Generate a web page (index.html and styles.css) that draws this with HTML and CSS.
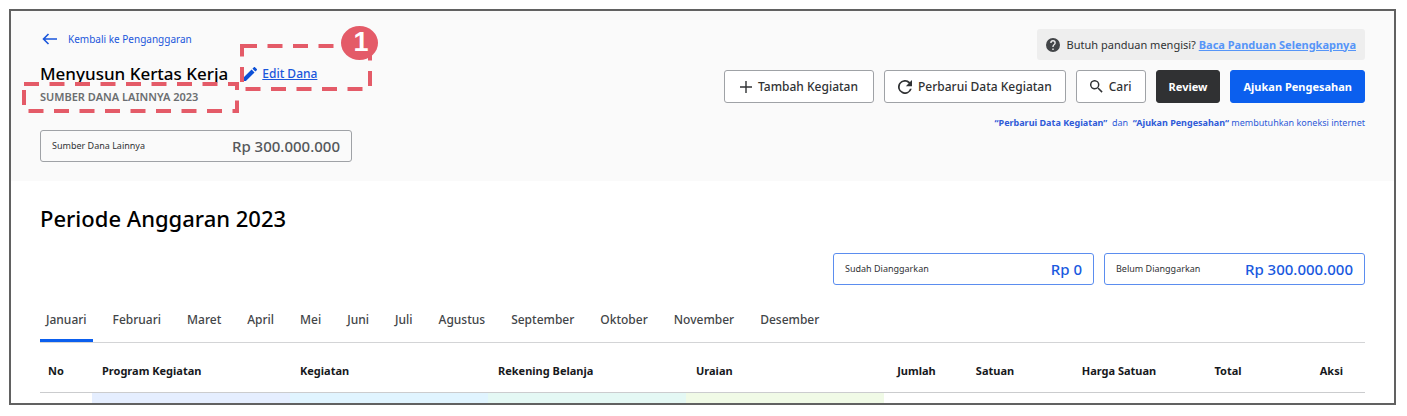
FILE: index.html
```html
<!DOCTYPE html>
<html lang="id">
<head>
    <meta charset="UTF-8">
    <title>Menyusun Kertas Kerja</title>
    <link rel="stylesheet" href="styles.css">
</head>
<body>
    <div class="frame">
        <header class="hero">
            <div class="hero-left">
                <a class="back-link" href="#">
                    <svg width="16" height="12" viewBox="0 0 16 12"><path d="M15 6H2M6.500 1L1.500 6l5 5" fill="none" stroke="currentColor" stroke-width="1.600"/></svg>
                    Kembali ke Penganggaran
                </a>
                <div class="title-row">
                    <h1>Menyusun Kertas Kerja</h1>
                    <a class="edit-link" href="#">
                        <svg width="14" height="14" viewBox="3 3 18 18"><path fill="currentColor" d="M3 17.250V21h3.750L17.810 9.940l-3.750-3.750L3 17.250zM20.710 7.040a1 1 0 0 0 0-1.410l-2.340-2.340a1 1 0 0 0-1.410 0l-1.830 1.830 3.750 3.750 1.830-1.830z"/></svg>
                        <span>Edit Dana</span>
                    </a>
                    <svg class="mark mark-edit" width="132" height="48"><rect x="2" y="2" width="128" height="43"/></svg>
                    <span class="mark-number">1</span>
                </div>
                <p class="subtitle">
                    SUMBER DANA LAINNYA 2023
                    <svg class="mark mark-source" width="218" height="32"><rect x="2" y="2" width="213" height="27"/></svg>
                </p>
                <div class="amount-box amount-grey">
                    <span>Sumber Dana Lainnya</span>
                    <strong>Rp 300.000.000</strong>
                </div>
            </div>

            <div class="hero-right">
                <div class="help">
                    <svg width="14" height="14" viewBox="2 2 20 20"><path fill="currentColor" d="M12 2a10 10 0 1 0 0 20 10 10 0 0 0 0-20zm1 17h-2v-2h2v2zm2.070-7.750l-.9.920C13.450 12.900 13 13.500 13 15h-2v-.5c0-1.100.45-2.100 1.170-2.830l1.240-1.260c.37-.36.59-.86.59-1.410a2 2 0 1 0-4 0H8a4 4 0 1 1 8 0c0 .88-.36 1.680-.93 2.250z"/></svg>
                    <span>Butuh panduan mengisi? <a href="#">Baca Panduan Selengkapnya</a></span>
                </div>
                <div class="actions">
                    <button class="btn btn-add">
                        <svg width="12" height="12" viewBox="0 0 12 12"><path d="M6 0v12M0 6h12" stroke="currentColor" stroke-width="1.400"/></svg>
                        Tambah Kegiatan
                    </button>
                    <button class="btn">
                        <svg width="14" height="14" viewBox="4 4 16 16"><path fill="currentColor" d="M17.650 6.350A8 8 0 1 0 19.730 14h-2.080A6 6 0 1 1 12 6c1.660 0 3.140.69 4.220 1.780L13 11h7V4l-2.350 2.350z"/></svg>
                        Perbarui Data Kegiatan
                    </button>
                    <button class="btn">
                        <svg width="13" height="13" viewBox="3 3 18 18"><path fill="currentColor" d="M15.500 14h-.79l-.28-.27A6.500 6.500 0 1 0 13.730 14.430l.27.28v.79l5 4.990L20.490 19l-4.990-5zm-6 0a4.500 4.500 0 1 1 0-9 4.500 4.500 0 0 1 0 9z"/></svg>
                        Cari
                    </button>
                    <button class="btn btn-dark">Review</button>
                    <button class="btn btn-primary">Ajukan Pengesahan</button>
                </div>
                <p class="note"><b>“Perbarui Data Kegiatan”</b>&nbsp; dan &nbsp;<b>“Ajukan Pengesahan“</b> membutuhkan koneksi internet</p>
            </div>
        </header>

        <main>
            <h2>Periode Anggaran 2023</h2>

            <div class="summary">
                <div class="amount-box amount-blue">
                    <span>Sudah Dianggarkan</span>
                    <strong>Rp 0</strong>
                </div>
                <div class="amount-box amount-blue">
                    <span>Belum Dianggarkan</span>
                    <strong>Rp 300.000.000</strong>
                </div>
            </div>

            <nav class="tabs">
                <a class="active" href="#">Januari</a>
                <a href="#">Februari</a>
                <a href="#">Maret</a>
                <a href="#">April</a>
                <a href="#">Mei</a>
                <a href="#">Juni</a>
                <a href="#">Juli</a>
                <a href="#">Agustus</a>
                <a href="#">September</a>
                <a href="#">Oktober</a>
                <a href="#">November</a>
                <a href="#">Desember</a>
            </nav>

            <table>
                <thead>
                    <tr>
                        <th class="col-no">No</th>
                        <th>Program Kegiatan</th>
                        <th>Kegiatan</th>
                        <th>Rekening Belanja</th>
                        <th>Uraian</th>
                        <th class="col-jumlah">Jumlah</th>
                        <th class="col-satuan">Satuan</th>
                        <th class="col-harga">Harga Satuan</th>
                        <th class="col-total">Total</th>
                        <th class="col-aksi">Aksi</th>
                    </tr>
                </thead>
                <tbody>
                    <tr>
                        <td></td>
                        <td class="cell-program"></td>
                        <td class="cell-kegiatan"></td>
                        <td class="cell-rekening"></td>
                        <td class="cell-uraian"></td>
                        <td></td>
                        <td></td>
                        <td></td>
                        <td></td>
                        <td></td>
                    </tr>
                </tbody>
            </table>
        </main>
    </div>
</body>
</html>
```

FILE: styles.css
```css
* {
    box-sizing: border-box;
}
body {
    font-family: "Noto Sans", "Open Sans", sans-serif;
    font-size: 12px;
    line-height: 16px;
    margin: 9px 11px 10px 9px;
    background-color: white;
    color: #303234;
}
h1, h2, p {
    margin: 0;
}
a {
    color: #1a56db;
}
svg {
    flex: none;
}
.frame {
    border: 2px solid #616161;
}

/* Header */
.hero {
    display: flex;
    justify-content: space-between;
    padding: 18px 29px 19px;
    background-color: #fafafa;
}
.hero-left {
    padding-top: 2px;
}
.back-link {
    display: flex;
    align-items: center;
    gap: 10px;
    padding-left: 2px;
    font-size: 10px;
    text-decoration: none;
}
.title-row {
    position: relative;
    display: flex;
    align-items: center;
    gap: 15px;
    margin-top: 15px;
}
h1 {
    font-size: 17px;
    line-height: 24px;
    font-weight: 500;
    color: black;
}
.edit-link {
    display: flex;
    align-items: center;
    gap: 5px;
    font-weight: 500;
}
.edit-link svg {
    color: #0b4fd6;
}
.subtitle {
    position: relative;
    margin-top: 3px;
    font-size: 11px;
    font-weight: 600;
    color: #6b6e70;
}
.mark {
    position: absolute;
    fill: none;
    stroke: #e45b68;
    stroke-width: 4;
    stroke-dasharray: 15 10.5;
    pointer-events: none;
}
.mark-edit {
    left: 200px;
    top: -18px;
}
.mark-source {
    left: -18px;
    top: -7px;
}
.mark-number {
    position: absolute;
    left: 301px;
    top: -36px;
    width: 37px;
    height: 34px;
    padding-left: 3px;
    border-radius: 50%;
    background-color: #e45b68;
    color: white;
    font: bold 27px/32px "Liberation Sans", Arial, sans-serif;
    text-align: center;
}
.amount-box {
    display: flex;
    align-items: center;
    justify-content: space-between;
    height: 32px;
    padding: 0 11px;
    border: 1px solid;
    border-radius: 3px;
    background-color: white;
    font-size: 9px;
}
.amount-box strong {
    font-size: 15px;
    font-weight: 500;
}
.amount-grey {
    width: 312px;
    margin-top: 25px;
    border-color: #9fa2a6;
    background-color: #fafafa;
}
.amount-grey strong {
    color: #55585b;
}
.hero-right {
    display: flex;
    flex-direction: column;
    align-items: flex-end;
}
.help {
    display: flex;
    align-items: center;
    gap: 7px;
    height: 31px;
    padding: 0 9px;
    border-radius: 3px;
    background-color: #eeeeee;
    font-size: 11px;
}
.help svg {
    color: #424548;
}
.help a {
    font-weight: 700;
    color: #5695f8;
}
.actions {
    display: flex;
    gap: 10px;
    margin-top: 10px;
}
.btn {
    display: flex;
    align-items: center;
    justify-content: center;
    gap: 6px;
    height: 33px;
    padding: 0 13px;
    border: 1px solid #9fa2a6;
    border-radius: 3px;
    background-color: white;
    color: #303234;
    font: 500 12px/16px "Noto Sans", "Open Sans", sans-serif;
    cursor: pointer;
}
.btn-add {
    padding: 0 15px;
}
.btn-dark, .btn-primary {
    padding: 0 12px;
    border-color: #303133;
    background-color: #303133;
    color: white;
    font-size: 11px;
    font-weight: 700;
}
.btn-primary {
    border-color: #0b5fee;
    background-color: #0b5fee;
}
.note {
    margin-top: 12px;
    font-size: 9px;
    color: #2f5bd8;
}

/* Budget */
main {
    padding: 21px 29px 0;
}
h2 {
    font-size: 22px;
    line-height: 32px;
    font-weight: 500;
    color: black;
}
.summary {
    display: flex;
    justify-content: flex-end;
    gap: 10px;
    margin-top: 19px;
}
.amount-blue {
    width: 261px;
    border-color: #5b8def;
}
.amount-blue strong {
    color: #1a5ae0;
}
.tabs {
    display: flex;
    gap: 14px;
    margin-top: 18px;
    border-bottom: 1px solid #d3d4d6;
}
.tabs a {
    padding: 9px 6px 11px;
    border-bottom: 3px solid transparent;
    color: #424548;
    font-weight: 500;
    text-decoration: none;
}
.tabs .active {
    border-color: #0b5fee;
    border-radius: 3px 3px 0 0;
}
table {
    width: 100%;
    table-layout: fixed;
    border-collapse: collapse;
}
th {
    height: 49px;
    padding: 8px 10px 0;
    border-bottom: 1px solid #cbccce;
    color: #17191c;
    font-size: 11px;
    font-weight: 700;
    text-align: left;
    white-space: nowrap;
}
td {
    height: 11px;
    padding: 0;
}
.col-no {
    width: 52px;
    padding-left: 8px;
}
.col-jumlah, .col-satuan, .col-harga, .col-total {
    text-align: center;
}
.col-jumlah {
    width: 65px;
}
.col-satuan {
    width: 92px;
}
.col-harga {
    width: 156px;
}
.col-total {
    width: 62px;
}
.col-aksi {
    width: 106px;
    padding-right: 22px;
    text-align: right;
}
.cell-program {
    background-color: #e5eeff;
}
.cell-kegiatan {
    background-color: #e0f4ff;
}
.cell-rekening {
    background-color: #e4f8f4;
}
.cell-uraian {
    background-color: #f0fae6;
}
```
